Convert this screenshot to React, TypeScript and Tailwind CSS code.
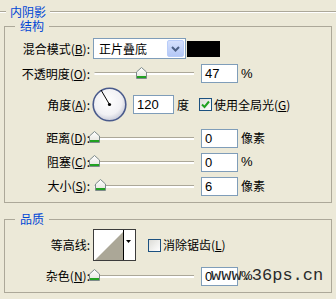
import * as React from 'react';

const cjk = "font-['Noto_Sans_CJK_SC',sans-serif]";

function NumBox({value, wide}: {value: string; wide?: boolean}): JSX.Element {
  return (
    <div
      className={`${wide ? 'w-[41px]' : 'w-[37px]'} h-[19px] shrink-0 border border-[#7f9db9] bg-white pl-[3px] font-['Liberation_Sans',sans-serif] text-[13px] leading-[17px] text-black`}
    >
      {value}
    </div>
  );
}

function Thumb(): JSX.Element {
  return (
    <svg width="11" height="12" viewBox="0 0 11 12">
      <defs>
        <linearGradient id="thumbFill" x1="0" y1="0" x2="0" y2="1">
          <stop offset="0" stopColor="#ffffff" />
          <stop offset="1" stopColor="#e3e3dc" />
        </linearGradient>
      </defs>
      <path d="M5.5 0.5 L10.5 5 L10.5 11.5 L0.5 11.5 L0.5 5 Z" fill="url(#thumbFill)" stroke="#7d8a8a" />
      <rect x="1" y="9" width="9" height="2" fill="#21a121" />
    </svg>
  );
}

// value 0..1 decides where the thumb sits on the track
function Slider({pos}: {pos: number}): JSX.Element {
  return (
    <div className="relative flex h-[20px] w-[111px] shrink-0 items-center pl-[4px] pr-[7px]">
      <div className="h-[3px] w-full rounded-l-full border-t border-[#aca899] bg-white" />
      <div className="absolute top-[3px]" style={{left: 4 + pos * 99 - 5}}>
        <Thumb />
      </div>
    </div>
  );
}

function Label({children, w = 'w-[85px]'}: {children: React.ReactNode; w?: string}): JSX.Element {
  return <div className={`${w} shrink-0 text-right`}>{children}</div>;
}

function CheckBox({checked}: {checked?: boolean}): JSX.Element {
  return (
    <div className="flex h-[13px] w-[13px] shrink-0 items-center justify-center border border-[#1c5180] bg-gradient-to-br from-[#dcdcd7] to-white">
      {checked && (
        <svg width="9" height="9" viewBox="0 0 9 9">
          <path d="M1 4.5 L3.5 7 L8 1.5" fill="none" stroke="#21a121" strokeWidth="2" />
        </svg>
      )}
    </div>
  );
}

function Dial(): JSX.Element {
  return (
    <svg width="35" height="35" viewBox="0 0 35 35" className="shrink-0">
      <defs>
        <radialGradient id="dialFill" cx="0.45" cy="0.4" r="0.6">
          <stop offset="0" stopColor="#ffffff" />
          <stop offset="0.7" stopColor="#f1f1f4" />
          <stop offset="1" stopColor="#c9ccd9" />
        </radialGradient>
      </defs>
      <circle cx="17.5" cy="17.5" r="16.3" fill="url(#dialFill)" stroke="#4a5b8c" strokeWidth="1.6" />
      <line x1="17.5" y1="17.5" x2="9" y2="3" stroke="#000" strokeWidth="1" />
      <circle cx="17.5" cy="17.5" r="1.6" fill="#000" />
    </svg>
  );
}

function Contour(): JSX.Element {
  return (
    <svg width="43" height="32" viewBox="0 0 43 32" className="shrink-0">
      <rect x="0.5" y="0.5" width="42" height="31" fill="#fff" stroke="#3c3c3c" />
      <rect x="1" y="1" width="29" height="30" fill="#fff" />
      <polygon points="2,31 30,3 30,31" fill="#aba797" />
      <line x1="30.5" y1="1" x2="30.5" y2="31" stroke="#000" />
      <polygon points="33,11 38,11 35.5,14" fill="#000" />
    </svg>
  );
}

function Group({title, children, className}: {title: string; children: React.ReactNode; className?: string}): JSX.Element {
  return (
    <fieldset className={`ml-[4px] w-[328px] border border-[#aca899] ${className ?? ''}`}>
      <legend className="ml-[10px] px-[5px] text-[12px] leading-[14px] text-[#0046d5]">{title}</legend>
      {children}
    </fieldset>
  );
}

export default function App(): JSX.Element {
  return (
    <div className={`relative h-[299px] w-[336px] overflow-hidden bg-[#ece9d8] pt-[5px] text-[12px] leading-[14px] text-black ${cjk}`}>
      <div className="flex h-[13px] items-center">
        <div className="h-[2px] w-[6px] border-t border-b border-t-[#aca899] border-b-white" />
        <div className="px-[4px] text-[#0046d5]">内阴影</div>
        <div className="h-[2px] flex-1 border-t border-b border-t-[#aca899] border-b-white" />
      </div>

      <Group title="结构" className="mt-[1px] pb-[6px]">
        <div className="mt-[5px] flex h-[21px] items-center">
          <Label>混合模式(<u>B</u>):</Label>
          <div className="ml-[3px] flex h-[21px] w-[93px] items-center justify-between border border-[#7f9db9] bg-white pl-[5px] pr-[1px]">
            <span>正片叠底</span>
            <div className="flex h-[17px] w-[17px] items-center justify-center rounded-[2px] border border-[#b9cdf9] bg-gradient-to-b from-[#d6e1fd] to-[#b4c8f6]">
              <svg width="9" height="6" viewBox="0 0 9 6">
                <path d="M1 1 L4.5 4.5 L8 1" fill="none" stroke="#4d6185" strokeWidth="2" />
              </svg>
            </div>
          </div>
          <div className="ml-[1px] h-[16px] w-[33px] bg-black" />
        </div>

        <div className="mt-[4px] flex h-[21px] items-center">
          <Label>不透明度(<u>O</u>):</Label>
          <Slider pos={0.47} />
          <NumBox value="47" />
          <span className="ml-[3px] font-['Liberation_Sans',sans-serif] text-[13px]">%</span>
        </div>

        <div className="mt-[3px] flex h-[35px] items-center">
          <Label>角度(<u>A</u>):</Label>
          <div className="ml-[2px]">
            <Dial />
          </div>
          <div className="ml-[6px]">
            <NumBox value="120" wide />
          </div>
          <span className="ml-[3px]">度</span>
          <div className="ml-[10px]">
            <CheckBox checked />
          </div>
          <span className="ml-[2px]">使用全局光(<u>G</u>)</span>
        </div>

        <div className="mt-[6px] flex h-[20px] items-center">
          <Label>距离(<u>D</u>):</Label>
          <Slider pos={0} />
          <NumBox value="0" />
          <span className="ml-[3px]">像素</span>
        </div>

        <div className="mt-[4px] flex h-[20px] items-center">
          <Label>阻塞(<u>C</u>):</Label>
          <Slider pos={0} />
          <NumBox value="0" />
          <span className="ml-[3px] font-['Liberation_Sans',sans-serif] text-[13px]">%</span>
        </div>

        <div className="mt-[4px] flex h-[20px] items-center">
          <Label>大小(<u>S</u>):</Label>
          <Slider pos={0.065} />
          <NumBox value="6" />
          <span className="ml-[3px]">像素</span>
        </div>
      </Group>

      <Group title="品质" className="mt-[9px] pb-[6px]">
        <div className="mt-[2px] flex h-[34px] items-center">
          <Label>等高线:</Label>
          <div className="ml-[3px]">
            <Contour />
          </div>
          <div className="ml-[12px]">
            <CheckBox />
          </div>
          <span className="ml-[2px]">消除锯齿(<u>L</u>)</span>
        </div>

        <div className="mt-[4px] flex h-[20px] items-center">
          <Label>杂色(<u>N</u>):</Label>
          <Slider pos={0} />
          <NumBox value="0" />
          <span className="ml-[3px] font-['Liberation_Sans',sans-serif] text-[13px]">%</span>
        </div>
      </Group>

      <div className="absolute left-[211px] top-[267px] font-['Liberation_Mono',monospace] text-[17px] leading-[17px] text-[#2a2a2a]">
        www.36ps.cn
      </div>
    </div>
  );
}
